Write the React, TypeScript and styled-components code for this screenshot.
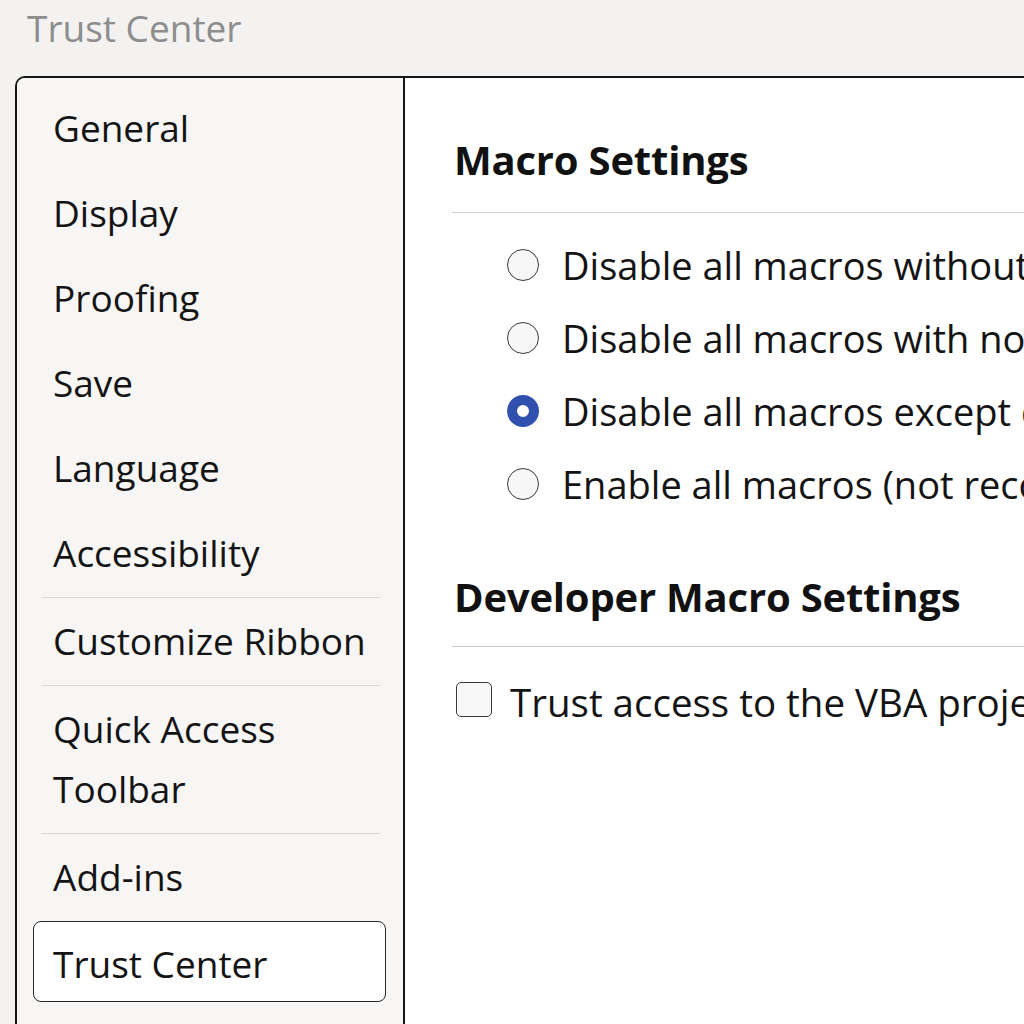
import React from "react";
import styled, { createGlobalStyle } from "styled-components";

const GlobalStyle = createGlobalStyle`
  html, body {
    margin: 0;
    padding: 0;
    background: #f3f2f0;
    overflow: hidden;
  }
  body {
    font-family: "Open Sans", "Noto Sans", "Liberation Sans", sans-serif;
    color: #141414;
  }
`;

const Page = styled.div`
  width: 1024px;
  height: 1024px;
  display: flex;
  flex-direction: column;
  overflow: hidden;
`;

const TitleBar = styled.div`
  height: 76px;
  flex: none;
  padding-left: 27px;
  font-size: 37px;
  line-height: 56px;
  color: #8d8d8d;
`;

const Frame = styled.div`
  flex: 1;
  margin-left: 15px;
  margin-right: -20px;
  margin-bottom: -20px;
  border: 2px solid #151515;
  border-top-left-radius: 10px;
  display: grid;
  grid-template-columns: 388px 1fr;
  overflow: hidden;
`;

const Sidebar = styled.nav`
  background: #f7f6f4;
  border-right: 2px solid #151515;
  padding-top: 8px;
  display: flex;
  flex-direction: column;
`;

const NavItem = styled.div<{ $selected?: boolean }>`
  font-size: 37px;
  line-height: 60px;
  padding: ${(p) => (p.$selected ? "4px" : "12px")} 0 ${(p) => (p.$selected ? "0" : "13px")}
    ${(p) => (p.$selected ? "19px" : "36px")};
  margin: ${(p) => (p.$selected ? "1px 17px 0 16px" : "0")};
  border: ${(p) => (p.$selected ? "1px solid #262626" : "none")};
  border-radius: ${(p) => (p.$selected ? "8px" : "0")};
  background: ${(p) => (p.$selected ? "#ffffff" : "transparent")};
  height: ${(p) => (p.$selected ? "81px" : "auto")};
  box-sizing: border-box;
  display: ${(p) => (p.$selected ? "flex" : "block")};
  align-items: center;
  white-space: nowrap;
`;

const NavDivider = styled.div`
  height: 1px;
  background: #d9d8d6;
  margin: 1px 23px 1px 24px;
`;

const Content = styled.main`
  background: #ffffff;
  padding: 57px 0 0 47px;
  overflow: hidden;
  white-space: nowrap;
`;

const Heading = styled.h2<{ $gap?: number }>`
  margin: ${(p) => p.$gap ?? 0}px 0 0 2px;
  font-size: 40px;
  font-weight: 700;
  line-height: 50px;
  color: #111;
  letter-spacing: -0.2px;
`;

const Rule = styled.div<{ $top: number; $bottom: number }>`
  height: 1px;
  background: #cfcfcf;
  margin: ${(p) => p.$top}px 0 ${(p) => p.$bottom}px 0;
`;

const OptionList = styled.div`
  display: flex;
  flex-direction: column;
  padding-left: 55px;
`;

const OptionRow = styled.label`
  height: 73px;
  display: flex;
  align-items: center;
  gap: 23px;
  font-size: 38px;
  color: #141414;
`;

const Radio = styled.span<{ $checked?: boolean }>`
  width: 32px;
  height: 32px;
  flex: none;
  box-sizing: border-box;
  border-radius: 50%;
  border: ${(p) => (p.$checked ? "10px solid #2f51ad" : "1.5px solid #3a3a3a")};
  background: ${(p) => (p.$checked ? "#ffffff" : "#f7f7f7")};
`;

const CheckRow = styled.label`
  height: 73px;
  display: flex;
  align-items: center;
  gap: 18px;
  padding-left: 4px;
  font-size: 38.5px;
  color: #141414;
`;

const CheckBox = styled.span`
  width: 36px;
  height: 35px;
  flex: none;
  box-sizing: border-box;
  border: 1.5px solid #3a3a3a;
  border-radius: 5px;
  background: #f8f8f8;
  margin-top: -5px;
`;

const navTop = ["General", "Display", "Proofing", "Save", "Language", "Accessibility"];

const options = [
  { label: "Disable all macros without notification", checked: false },
  { label: "Disable all macros with notification", checked: false },
  { label: "Disable all macros except digitally signed macros", checked: true },
  { label: "Enable all macros (not recommended; potentially dangerous code can run)", checked: false },
];

export default function App() {
  return (
    <Page>
      <GlobalStyle />
      <TitleBar>Trust Center</TitleBar>
      <Frame>
        <Sidebar>
          {navTop.map((n) => (
            <NavItem key={n}>{n}</NavItem>
          ))}
          <NavDivider />
          <NavItem>Customize Ribbon</NavItem>
          <NavDivider />
          <NavItem>
            Quick Access
            <br />
            Toolbar
          </NavItem>
          <NavDivider />
          <NavItem>Add-ins</NavItem>
          <NavItem $selected>Trust Center</NavItem>
        </Sidebar>
        <Content>
          <Heading>Macro Settings</Heading>
          <Rule $top={27} $bottom={15} />
          <OptionList>
            {options.map((o) => (
              <OptionRow key={o.label}>
                <Radio $checked={o.checked} />
                {o.label}
              </OptionRow>
            ))}
          </OptionList>
          <Heading $gap={52}>Developer Macro Settings</Heading>
          <Rule $top={24} $bottom={18} />
          <CheckRow>
            <CheckBox />
            Trust access to the VBA project object model
          </CheckRow>
        </Content>
      </Frame>
    </Page>
  );
}
